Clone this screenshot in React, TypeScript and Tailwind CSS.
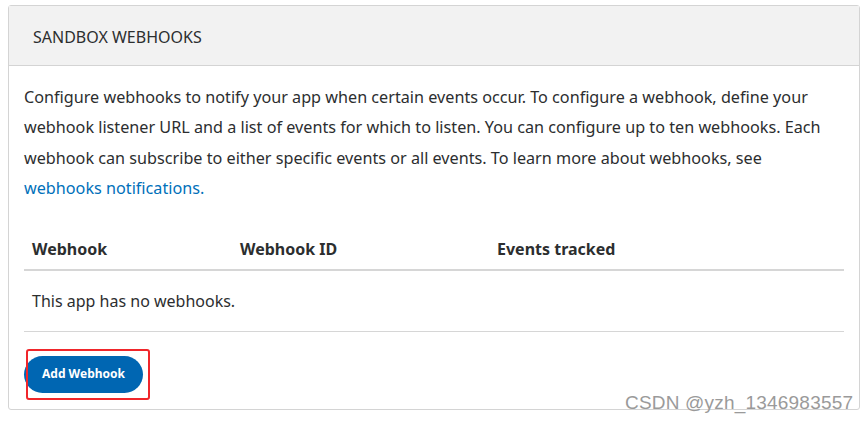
export default function App() {
  return (
    <div className="relative min-h-screen bg-white pt-[5px] pl-2 pr-[8px] font-['Noto_Sans',sans-serif] text-[#2c2e2f]">
      <div className="w-[852px] rounded-[3px] border border-[#d4d4d4]">
        {/* header */}
        <div className="flex h-[60px] items-center border-b border-[#d4d4d4] bg-[#f2f2f2] px-6 pt-[2px] text-[16px] uppercase">
          Sandbox Webhooks
        </div>

        <div className="px-[15px] pt-4 pb-[16px]">
          <p className="text-[16.2px] leading-[30.4px]">
            Configure webhooks to notify your app when certain events occur. To configure a webhook, define your
            webhook listener URL and a list of events for which to listen. You can configure up to ten webhooks. Each
            webhook can subscribe to either specific events or all events. To learn more about webhooks, see
            <br />
            <a href="#" className="text-[#0070ba]">webhooks notifications.</a>
          </p>

          <table className="mt-[25px] w-full border-collapse text-left text-[16px]">
            <thead>
              <tr className="border-b-2 border-[#d6d6d6]">
                <th className="w-[208px] px-2 py-2 leading-6 font-bold">Webhook</th>
                <th className="w-[257px] px-2 py-2 leading-6 font-bold">Webhook ID</th>
                <th className="px-2 py-2 leading-6 font-bold">Events tracked</th>
              </tr>
            </thead>
            <tbody>
              <tr className="border-b border-[#d6d6d6]">
                <td colSpan={3} className="px-2 py-[18px] leading-6">This app has no webhooks.</td>
              </tr>
            </tbody>
          </table>

          <div className="relative mt-[24px] h-[37px]">
            <button className="h-[37px] w-[119px] rounded-full bg-[#0066b2] text-[12px] font-bold text-white">
              Add Webhook
            </button>
            <div className="pointer-events-none absolute top-[-7px] left-[2px] h-[51px] w-[124px] rounded-[3px] border-2 border-[#f0262b]" />
          </div>
        </div>
      </div>

      <div className="absolute top-[391px] left-[625px] font-['Liberation_Sans',Arial,sans-serif] text-[19px] leading-6 tracking-[0.2px] text-[#9a9a9a]">
        CSDN @yzh_1346983557
      </div>
    </div>
  );
}
